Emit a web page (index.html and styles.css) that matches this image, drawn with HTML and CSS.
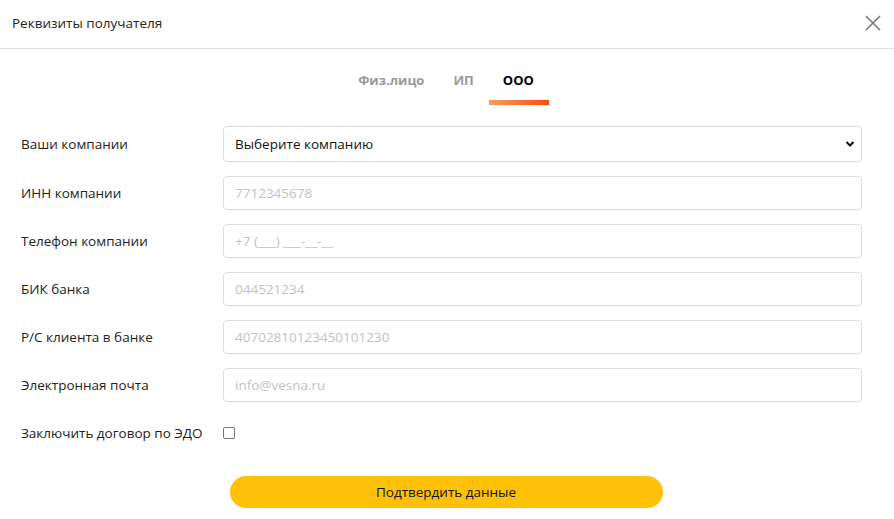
FILE: index.html
```html
<!DOCTYPE html>
<html lang="ru">
<head>
<meta charset="utf-8">
<link rel="stylesheet" href="styles.css">
</head>
<body>
<div class="modal">
  <div class="modal-header">
    <span class="modal-title">Реквизиты получателя</span>
    <button class="close" aria-label="Закрыть">
      <svg width="16" height="16" viewBox="0 0 16 16"><path d="M1 1L15 15M15 1L1 15" stroke="#7a7a7a" stroke-width="1.6" fill="none"/></svg>
    </button>
  </div>
  <div class="tabs">
    <div class="tab">Физ.лицо</div>
    <div class="tab">ИП</div>
    <div class="tab active">ООО</div>
  </div>
  <form class="form">
    <div class="row first">
      <label class="label">Ваши компании</label>
      <div class="select">
        <span>Выберите компанию</span>
        <svg width="10" height="8" viewBox="0 0 10 8"><path d="M1.5 2L5 5.5L8.5 2" stroke="#111" stroke-width="2" fill="none"/></svg>
      </div>
    </div>
    <div class="row">
      <label class="label">ИНН компании</label>
      <input class="input" placeholder="7712345678">
    </div>
    <div class="row">
      <label class="label">Телефон компании</label>
      <input class="input" placeholder="+7 (___) ___-__-__">
    </div>
    <div class="row">
      <label class="label">БИК банка</label>
      <input class="input" placeholder="044521234">
    </div>
    <div class="row">
      <label class="label">Р/С клиента в банке</label>
      <input class="input" placeholder="40702810123450101230">
    </div>
    <div class="row">
      <label class="label">Электронная почта</label>
      <input class="input" placeholder="info@vesna.ru">
    </div>
    <div class="row">
      <label class="label">Заключить договор по ЭДО</label>
      <span class="checkbox"></span>
    </div>
    <div class="actions">
      <button type="button" class="submit">Подтвердить данные</button>
    </div>
  </form>
</div>
</body>
</html>
```
FILE: styles.css
```css
* { box-sizing: border-box; }
html, body { margin: 0; padding: 0; background: #fff; }
body {
  font-family: "Open Sans", "Noto Sans", sans-serif;
  font-size: 13.5px;
  color: #222;
}
.modal { width: 894px; height: 519px; }
.modal-header {
  height: 49px;
  border-bottom: 1px solid #dee2e6;
  display: flex;
  align-items: center;
  justify-content: space-between;
  padding: 0 12px 0 12px;
}
.modal-title { font-size: 13.5px; color: #222; margin-top: -2px; }
.close {
  border: 0; background: none; padding: 0; width: 18px; height: 18px;
  display: flex; align-items: center; justify-content: center; margin-top: -3px;
}
.tabs {
  display: flex;
  justify-content: center;
  gap: 29px;
  padding-top: 22px;
  height: 70px;
  margin-left: -2px;
}
.tab {
  font-weight: 700;
  font-size: 13px;
  color: #999;
  position: relative;
  height: 20px;
}
.tab.active { color: #000; }
.tab.active::after {
  content: "";
  position: absolute;
  left: -14px;
  right: -15px;
  top: 29px;
  height: 5px;
  background: linear-gradient(90deg, #ff9c5a, #ff4a0a);
}
.form { padding: 0 32px 0 21px; }
.row {
  display: flex;
  align-items: center;
  height: 48px;
}
.row.first { height: 50px; }
.label {
  width: 202px;
  flex: none;
  color: #222;
  white-space: nowrap;
}
.select, .input {
  flex: 1;
  height: 34px;
  border: 1px solid #dcdcdc;
  border-radius: 4px;
  background: #fff;
  font-family: inherit;
  font-size: 13.5px;
  padding: 0 11px;
}
.select {
  height: 36px;
  display: flex;
  align-items: center;
  justify-content: space-between;
  padding-right: 6px;
  color: #111;
}
.input { outline: none; }
.input::placeholder { color: #c2c2c2; }
.checkbox {
  width: 12px; height: 12px;
  border: 1px solid #777;
  border-radius: 2px;
  background: #fff;
  margin-top: -1px;
}
.actions {
  display: flex;
  justify-content: center;
  padding-top: 19px;
  padding-left: 9px;
}
.submit {
  width: 433px;
  height: 32px;
  border: 0;
  border-radius: 16px;
  background: #ffc107;
  font-family: inherit;
  font-size: 13.5px;
  color: #111;
}
```
